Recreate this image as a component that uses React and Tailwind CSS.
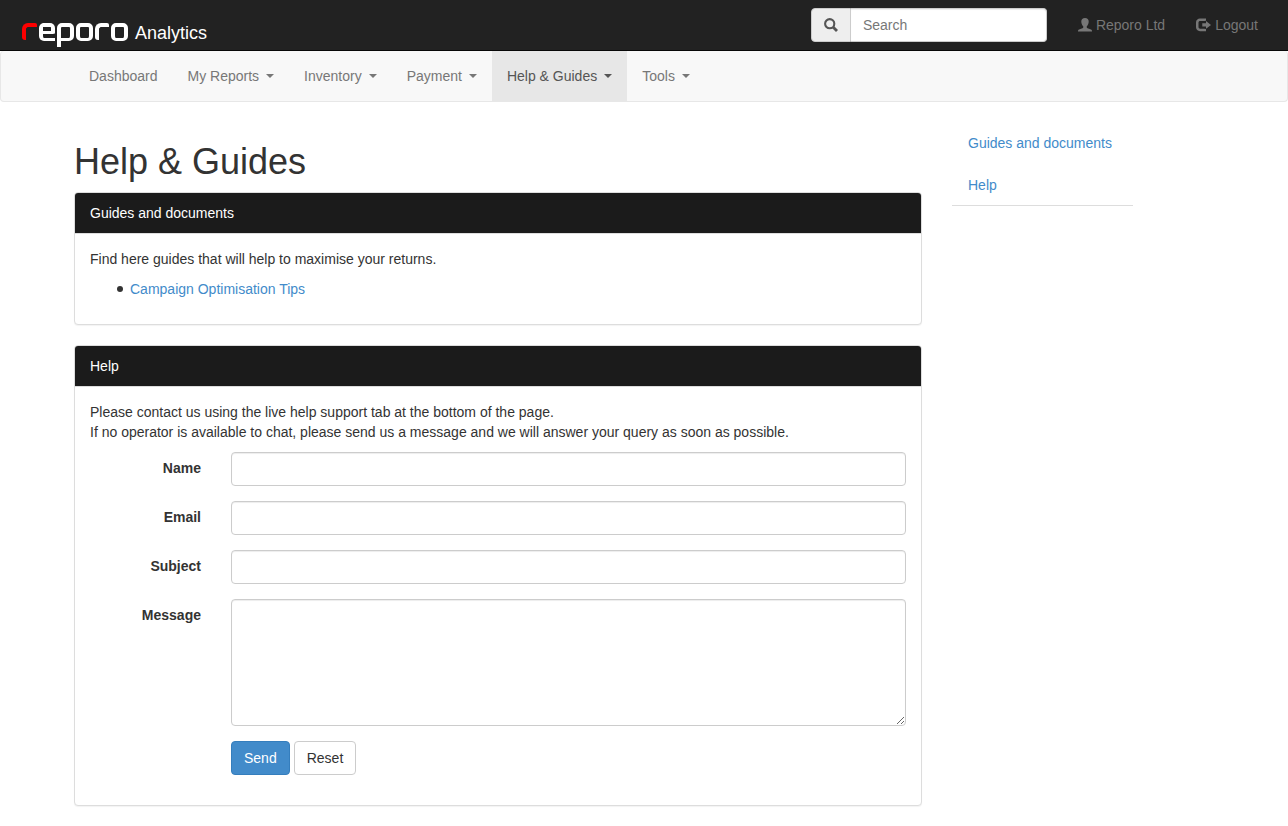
const links = ['Dashboard', 'My Reports', 'Inventory', 'Payment', 'Help & Guides', 'Tools'];

function Logo() {
  return (
    <span role="img" aria-label="Company logo" className="flex h-6 items-start gap-[2px]">
      <span className="h-[17px] w-[15px] rounded-tl-[6px] rounded-tr-[2px] rounded-bl-[3px] border-t-4 border-l-4 border-[#f00]" />
      <span className="flex h-[18px] w-4 flex-col rounded-l-[5px] border-b-[3px] border-l-4 border-white">
        <span className="h-[11px] rounded-tr-[5px] rounded-br-[2px] border-t-4 border-r-4 border-b-[3px] border-white" />
      </span>
      <span className="flex h-6 w-[17px] flex-col">
        <span className="h-[18px] rounded-[5px] rounded-bl-none border-x-4 border-t-4 border-b-[3px] border-white" />
        <span className="h-[6px] w-1 bg-white" />
      </span>
      <span className="h-[18px] w-[17px] rounded-[5px] border-x-4 border-t-4 border-b-[3px] border-white" />
      <span className="h-[17px] w-[14px] rounded-tl-[6px] rounded-tr-[2px] rounded-bl-[3px] border-t-4 border-l-4 border-white" />
      <span className="h-[18px] w-[17px] rounded-[5px] border-x-4 border-t-4 border-b-[3px] border-white" />
    </span>
  );
}

function SearchIcon() {
  return (
    <svg viewBox="0 0 14 14" className="size-[14px]" fill="none" stroke="currentColor" aria-hidden="true">
      <circle cx="5.7" cy="5.7" r="4.6" strokeWidth="2.1" />
      <path d="M9 9l4 4" strokeWidth="2.8" />
    </svg>
  );
}

function UserIcon() {
  return (
    <svg viewBox="0 0 14 14" className="size-[14px]" fill="currentColor" aria-hidden="true">
      <path d="M7 0C4.600 0 3.300 1.400 3.300 3.500c0 2 .8 3.900 2 4.900v.9c0 .4-.3.700-.8.900L1 11.500c-.6.300-1 .8-1 1.500v.6h14V13c0-.7-.4-1.200-1-1.500l-3.500-1.300c-.5-.2-.8-.5-.8-.9v-.9c1.200-1 2-2.900 2-4.900C10.700 1.400 9.400 0 7 0z" />
    </svg>
  );
}

function LogoutIcon() {
  return (
    <svg viewBox="0 0 15 14" className="h-[14px] w-[15px]" fill="currentColor" aria-hidden="true">
      <path d="M10 2.800V.6H4C1.700.6 0 2.300 0 4.500v4.800c0 2.200 1.700 3.900 4 3.900h6V11l-1.600-.3H4.200c-1 0-1.700-.6-1.700-1.600V4.700c0-1 .7-1.600 1.700-1.600h4.200z" />
      <path d="M10 3v2.300H6.300v3.200H10v2.300l5-3.900z" />
    </svg>
  );
}

function Panel({ id, title, children }) {
  return (
    <section id={id} className="mb-5 rounded border border-[#ddd] bg-white shadow-[0_1px_1px_rgba(0,0,0,0.05)]">
      <h2 className="rounded-t-[3px] border-b border-[#ddd] bg-[#1b1b1b] px-[15px] py-[10px] text-white">{title}</h2>
      <div className="p-[15px]">{children}</div>
    </section>
  );
}

const control =
  'block w-full rounded border border-[#ccc] bg-white px-3 py-[6px] shadow-[inset_0_1px_1px_rgba(0,0,0,0.075)]';

function Field({ label, name, type }) {
  return (
    <div className="mb-[15px] flex gap-[30px]">
      <label htmlFor={name} className="w-[111px] shrink-0 pt-[6px] text-right font-bold">
        {label}
      </label>
      {type === 'textarea' ? (
        <textarea id={name} name={name} rows={6} className={control + ' h-[127px]'} />
      ) : (
        <input id={name} name={name} type={type} className={control + ' h-[34px]'} />
      )}
    </div>
  );
}

export default function App() {
  return (
    <div className="bg-white font-['Liberation_Sans',Arial,sans-serif] text-[14px] leading-5 text-[#333]">
      <header className="flex items-start justify-between border-b border-[#080808] bg-[#222] pr-[15px]">
        <a href="#home" className="flex items-start gap-[7px] pt-[23px] pl-[22px] text-[18px] text-white">
          <Logo />
          <span>Analytics</span>
        </a>
        <div className="flex h-[50px] items-start gap-px">
          <form role="search" className="mt-2 mr-[15px] flex h-[34px] w-[236px]" onSubmit={(e) => e.preventDefault()}>
            <button
              type="submit"
              aria-label="Submit search"
              className="flex w-10 shrink-0 items-center justify-center rounded-l border border-[#ccc] bg-[#eee] text-[#555]"
            >
              <SearchIcon />
            </button>
            <input
              type="search"
              aria-label="Search"
              placeholder="Search"
              className="w-full min-w-0 rounded-r border border-l-0 border-[#ccc] bg-white px-3 shadow-[inset_0_1px_1px_rgba(0,0,0,0.075)] placeholder:text-[#777]"
            />
          </form>
          <a href="#account" className="flex items-center gap-1 px-[15px] py-[15px] text-[#777]">
            <UserIcon />
            Reporo Ltd
          </a>
          <a href="#logout" className="flex items-center gap-1 px-[15px] py-[15px] text-[#777]">
            <LogoutIcon />
            Logout
          </a>
        </div>
      </header>

      <nav className="rounded border border-t-0 border-[#e7e7e7] bg-[#f8f8f8]">
        <ul className="mx-auto flex max-w-[1140px] whitespace-nowrap">
          {links.map((label) => (
            <li key={label}>
              <a
                href="#menu"
                className={
                  'flex h-[50px] items-center gap-[7px] px-[15px] ' +
                  (label === 'Help & Guides' ? 'bg-[#e7e7e7] text-[#555]' : 'text-[#777]')
                }
              >
                {label}
                {label !== 'Dashboard' && (
                  <span className="border-x-4 border-t-4 border-x-transparent border-t-current" />
                )}
              </a>
            </li>
          ))}
        </ul>
      </nav>

      <div className="mx-auto flex max-w-[1170px] px-[15px] pt-5">
        <main className="min-w-0 flex-1 pt-5">
          <h1 className="mb-[10px] text-[36px] leading-10">Help &amp; Guides</h1>
          <Panel id="guides" title="Guides and documents">
            <p className="mb-[10px]">Find here guides that will help to maximise your returns.</p>
            <ul className="mb-[10px] pl-[27px]">
              <li className="flex items-center gap-[7px]">
                <span className="size-[6px] rounded-full bg-[#333]" />
                <a href="#tips" className="text-[#428bca]">
                  Campaign Optimisation Tips
                </a>
              </li>
            </ul>
          </Panel>
          <Panel id="help" title="Help">
            <p className="mb-[10px]">
              Please contact us using the live help support tab at the bottom of the page.
              <br />
              If no operator is available to chat, please send us a message and we will answer your query as soon as
              possible.
            </p>
            <form onSubmit={(e) => e.preventDefault()}>
              <Field label="Name" name="name" type="text" />
              <Field label="Email" name="email" type="email" />
              <Field label="Subject" name="subject" type="text" />
              <Field label="Message" name="message" type="textarea" />
              <div className="mb-[15px] flex gap-1 pl-[141px]">
                <button
                  type="submit"
                  className="rounded border border-[#357ebd] bg-[#428bca] px-3 py-[6px] text-white"
                >
                  Send
                </button>
                <button type="reset" className="rounded border border-[#ccc] bg-white px-3 py-[6px]">
                  Reset
                </button>
              </div>
            </form>
          </Panel>
        </main>
        <aside className="ml-[30px] w-[262px] shrink-0">
          <nav className="flex w-[181px] flex-col gap-[2px] border-y border-t-transparent border-b-[#ddd] text-[#428bca]">
            <a href="#guides" className="px-4 py-[10px]">
              Guides and documents
            </a>
            <a href="#help" className="px-4 py-[10px]">
              Help
            </a>
          </nav>
        </aside>
      </div>
    </div>
  );
}
